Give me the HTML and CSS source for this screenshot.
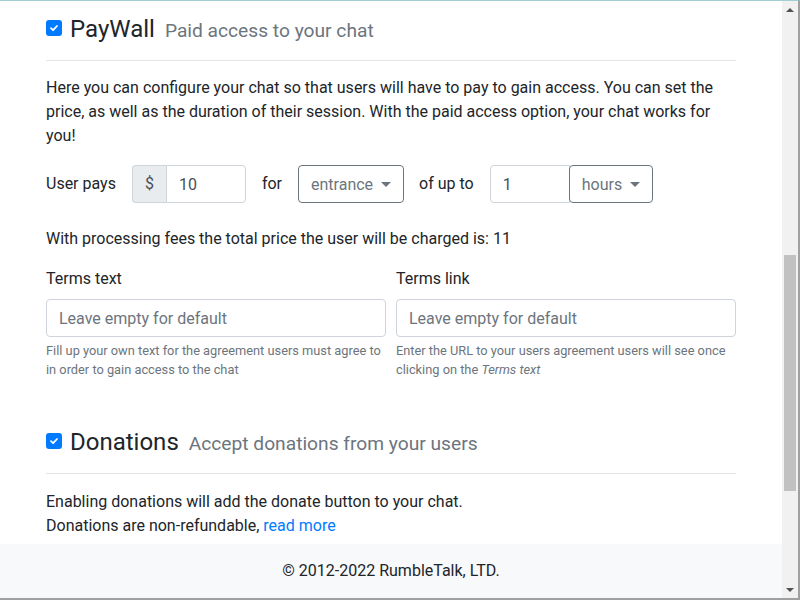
FILE: index.html
```html
<!DOCTYPE html>
<html lang="en">
<head>
    <meta charset="UTF-8">
    <meta name="viewport" content="width=device-width, initial-scale=1.0">
    <title>Chat Settings</title>
    <link rel="stylesheet" href="styles.css">
</head>
<body>

<div class="frame">
    <div class="page">
        <div class="content">
            <div class="container">

                <div class="section-head">
                    <span class="check"><svg width="10" height="10" viewBox="0 0 10 10"><path d="M2 5.2 L4.1 7.2 L8 3" fill="none" stroke="#fff" stroke-width="1.8" stroke-linecap="round" stroke-linejoin="round"/></svg></span>
                    <span class="title">PayWall</span>
                    <span class="subtitle">Paid access to your chat</span>
                </div>

                <p class="intro">Here you can configure your chat so that users will have to pay to gain access. You can set the price, as well as the duration of their session. With the paid access option, your chat works for you!</p>

                <div class="price-row">
                    <span class="row-label">User pays</span>
                    <div class="input-group price">
                        <span class="addon">$</span>
                        <input class="field joined-left" type="text" value="10">
                    </div>
                    <span class="row-label">for</span>
                    <button class="dropdown">entrance</button>
                    <span class="row-label">of up to</span>
                    <div class="input-group duration">
                        <input class="field joined-right" type="text" value="1">
                        <button class="dropdown joined-left">hours</button>
                    </div>
                </div>

                <p class="total">With processing fees the total price the user will be charged is: 11</p>

                <div class="terms">
                    <div class="form-group">
                        <label>Terms text</label>
                        <input class="field" type="text" placeholder="Leave empty for default">
                        <small class="help">Fill up your own text for the agreement users must agree to in order to gain access to the chat</small>
                    </div>
                    <div class="form-group">
                        <label>Terms link</label>
                        <input class="field" type="text" placeholder="Leave empty for default">
                        <small class="help">Enter the URL to your users agreement users will see once clicking on the <em>Terms text</em></small>
                    </div>
                </div>

                <div class="section-head donations">
                    <span class="check"><svg width="10" height="10" viewBox="0 0 10 10"><path d="M2 5.2 L4.1 7.2 L8 3" fill="none" stroke="#fff" stroke-width="1.8" stroke-linecap="round" stroke-linejoin="round"/></svg></span>
                    <span class="title">Donations</span>
                    <span class="subtitle">Accept donations from your users</span>
                </div>

                <p class="donate-text">Enabling donations will add the donate button to your chat.<br>
                Donations are non-refundable, <a href="#">read more</a></p>

            </div>
        </div>
        <footer class="footer">© 2012-2022 RumbleTalk, LTD.</footer>
    </div>

    <div class="scrollbar">
        <div class="arrow up"></div>
        <div class="track"><div class="thumb"></div></div>
        <div class="arrow down"></div>
    </div>
</div>

</body>
</html>
```

FILE: styles.css
```css
* {
    box-sizing: border-box;
}
body {
    margin: 0;
    font-family: Roboto, "Liberation Sans", Arial, sans-serif;
    font-size: 16px;
    line-height: 24px;
    color: #212529;
    background: #fff;
}
.frame {
    width: 800px;
    height: 600px;
    display: flex;
    border-top: 1px solid #9fcfd0;
    border-right: 2px solid #a0a0a0;
    border-bottom: 2px solid #a0a0a0;
    overflow: hidden;
}
.page {
    flex: 1;
    display: flex;
    flex-direction: column;
    min-width: 0;
}
.content {
    flex: 1;
    overflow: hidden;
}
.container {
    width: 690px;
    margin: 0 auto;
    padding-top: 13px;
}
.section-head {
    display: flex;
    align-items: center;
    border-bottom: 1px solid #e3e5e8;
    padding-bottom: 15px;
    line-height: 29px;
}
.check {
    width: 16px;
    height: 16px;
    border-radius: 3px;
    background: #007bff;
    display: flex;
    align-items: center;
    justify-content: center;
    margin-right: 8px;
    margin-top: -3px;
}
.title {
    font-size: 24px;
    margin-right: 10px;
}
.subtitle {
    font-size: 19.2px;
    color: #6c757d;
    padding-top: 2px;
}
.intro {
    margin: 15px 0 17px;
}
.price-row {
    display: flex;
    align-items: center;
}
.row-label {
    margin-right: 16px;
}
.input-group {
    display: flex;
    margin-right: 16px;
}
.addon {
    width: 34px;
    height: 38px;
    line-height: 36px;
    text-align: center;
    background: #e9ecef;
    border: 1px solid #ced4da;
    border-right: none;
    border-radius: 4px 0 0 4px;
    color: #495057;
}
.field {
    height: 38px;
    padding: 6px 12px;
    border: 1px solid #ced4da;
    border-radius: 4px;
    font-family: inherit;
    font-size: 16px;
    color: #495057;
    background: #fff;
    outline: none;
}
.field::placeholder {
    color: #6c757d;
}
.price .field,
.duration .field {
    width: 80px;
}
.joined-left {
    border-top-left-radius: 0;
    border-bottom-left-radius: 0;
}
.joined-right {
    border-top-right-radius: 0;
    border-bottom-right-radius: 0;
}
.dropdown {
    height: 38px;
    padding: 6px 12px;
    border: 1px solid #6c757d;
    border-radius: 4px;
    background: #fff;
    color: #6c757d;
    font-family: inherit;
    font-size: 16px;
    margin-right: 15px;
    display: flex;
    align-items: center;
}
.dropdown::after {
    content: "";
    display: inline-block;
    margin-left: 8px;
    border-top: 5px solid #6c757d;
    border-left: 5px solid transparent;
    border-right: 5px solid transparent;
}
.duration .dropdown {
    margin-right: 0;
    margin-left: -1px;
}
.total {
    margin: 24px 0 16px;
}
.terms {
    display: flex;
    gap: 10px;
}
.form-group {
    flex: 1;
    display: flex;
    flex-direction: column;
}
.form-group label {
    margin-bottom: 8px;
}
.form-group .field {
    width: 100%;
}
.help {
    display: block;
    margin-top: 4px;
    font-size: 12.8px;
    line-height: 19.2px;
    color: #6c757d;
}
.donations {
    margin-top: 48px;
}
.donate-text {
    margin: 16px 0 0;
}
a {
    color: #007bff;
    text-decoration: none;
}
.footer {
    height: 54px;
    flex-shrink: 0;
    background: #f8f9fa;
    text-align: center;
    line-height: 54px;
}
.scrollbar {
    width: 16px;
    background: #f1f1f1;
    display: flex;
    flex-direction: column;
}
.arrow {
    height: 17px;
    display: flex;
    align-items: center;
    justify-content: center;
}
.arrow.up::before {
    content: "";
    border-bottom: 4px solid #505050;
    border-left: 4px solid transparent;
    border-right: 4px solid transparent;
}
.arrow.down::before {
    content: "";
    border-top: 4px solid #505050;
    border-left: 4px solid transparent;
    border-right: 4px solid transparent;
}
.track {
    flex: 1;
    padding: 0 2px;
}
.thumb {
    margin-top: 237px;
    height: 236px;
    background: #c1c1c1;
}
```
